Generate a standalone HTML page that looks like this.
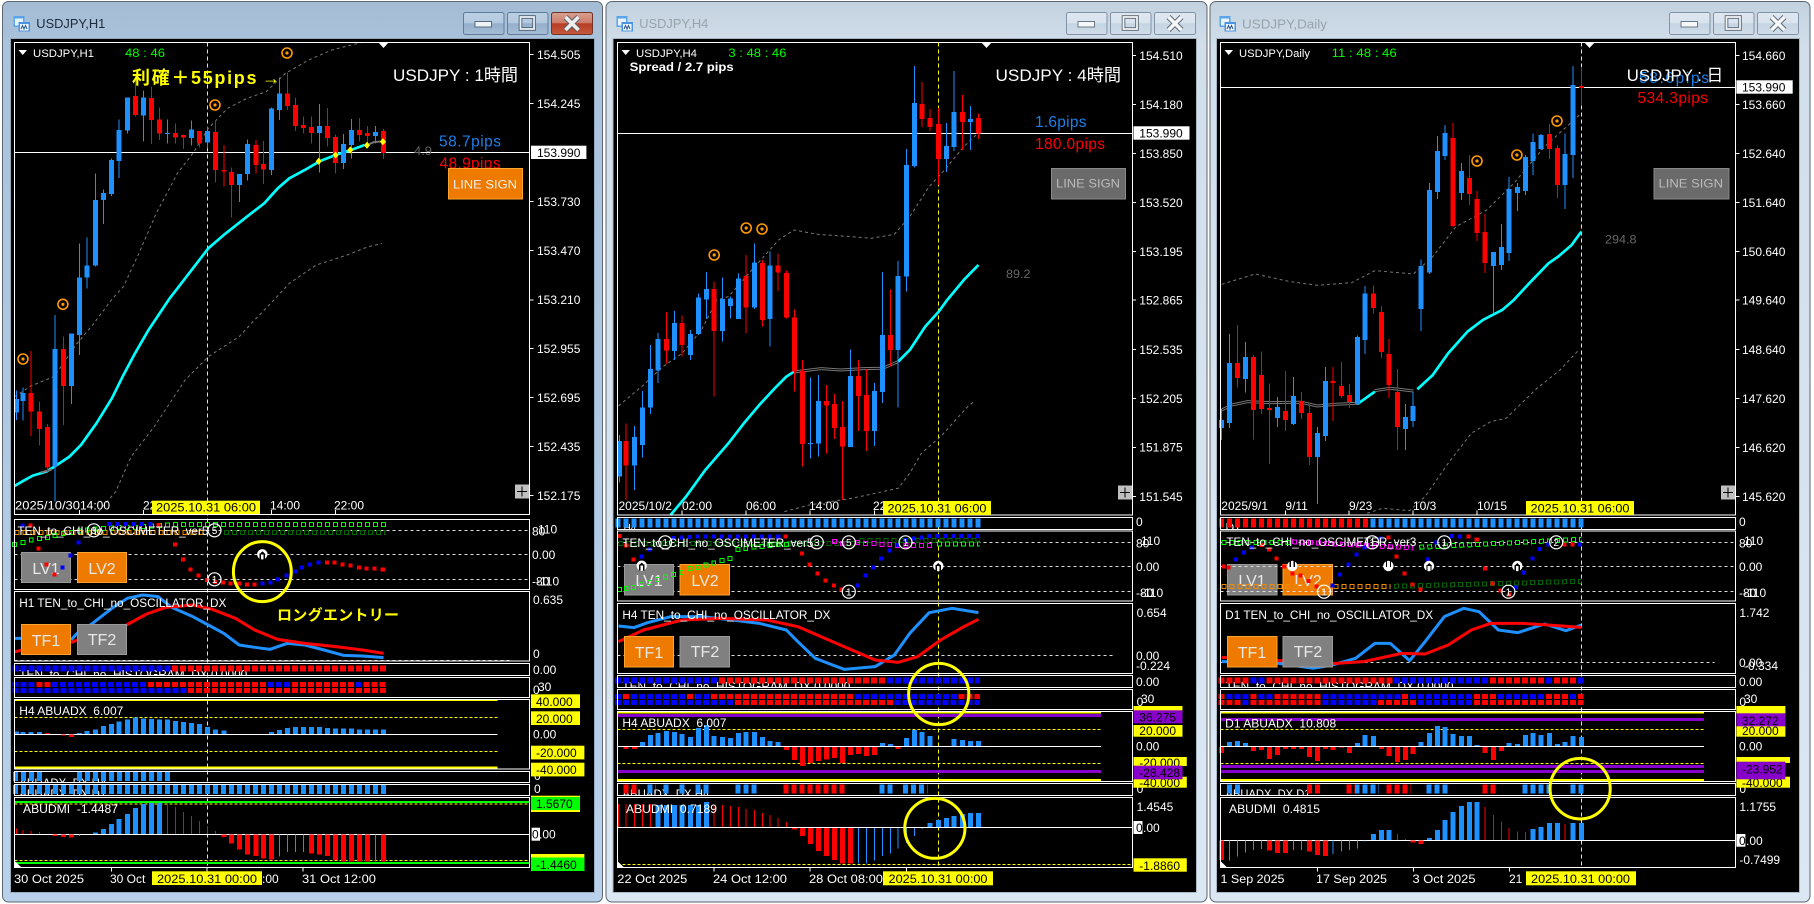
<!DOCTYPE html>
<html><head><meta charset="utf-8"><title>USDJPY</title>
<style>
html,body{margin:0;padding:0;background:#fff;width:1814px;height:904px;overflow:hidden}
svg{display:block}
text{font-family:"Liberation Sans","Noto Sans CJK JP",sans-serif;fill:#fff;font-size:12px;white-space:pre}
path,ellipse{fill:none;vector-effect:non-scaling-stroke;shape-rendering:crispEdges}
.A{transform:scale(.3858,.3333)}
.B{transform:translate(0,300px) scale(.3858,.3333)}
.C{transform:translate(0,600px) scale(.3858,.3333)}
.bw{stroke:#1e90ff;stroke-width:1}.bb{stroke:#1e90ff;stroke-width:5}
.rw{stroke:#f00;stroke-width:1}.rb{stroke:#f00;stroke-width:5}
.cy{stroke:#0ff;stroke-width:2.7;shape-rendering:auto;stroke-linejoin:round}
.gd{stroke:#777;stroke-width:1;stroke-dasharray:3 3;shape-rendering:auto}
.gl{stroke:#777;stroke-width:3;shape-rendering:auto}
.gk{stroke:#000;stroke-width:1;shape-rendering:auto}
.lb{stroke:#1e90ff;stroke-width:3;shape-rendering:auto;stroke-linejoin:round}
.lr{stroke:#f00;stroke-width:3;shape-rendering:auto;stroke-linejoin:round}
.bd{stroke:#fff;stroke-width:1}
.wd{stroke:#ddd;stroke-width:1;stroke-dasharray:3 3}
.yd{stroke:#ff0;stroke-width:1;stroke-dasharray:4 3}
.yl{stroke:#ff0;stroke-width:2}.pl{stroke:#80c;stroke-width:3}.gn{stroke:#0f0;stroke-width:2}
.wl{stroke:#fff;stroke-width:1}
.el{stroke:#ff0;stroke-width:3;shape-rendering:auto}
.sq{stroke-linecap:square;stroke-width:4}
.sb{stroke:#00f}.sr{stroke:#f00}
.rb6{stroke:#f00;stroke-width:6;stroke-dasharray:6 2}.bb6{stroke:#00f;stroke-width:6;stroke-dasharray:6 2}
.rb5{stroke:#f00;stroke-width:5;stroke-dasharray:6 2}.bb5{stroke:#00f;stroke-width:5;stroke-dasharray:6 2}
.hb{stroke:#1e90ff;stroke-width:9;stroke-dasharray:5 3}.hr{stroke:#f00;stroke-width:9;stroke-dasharray:5 3}
.ho{stroke-width:5;stroke-dasharray:5 3}.hi{stroke:#000;stroke-width:3;stroke-dasharray:3 5;stroke-dashoffset:-1}
.hg{stroke:#0f0;stroke-width:1}
.ax{font-size:12px}.k{fill:#000}
.tt{font-size:12.5px;fill:#1c2c3c}.ti{font-size:12.5px;fill:#98a2ac}
.gr{fill:#0f0}.bt{font-size:16px;text-anchor:middle;fill:#e8e8e8}
.ls{font-size:12px;fill:#eee}.lg{font-size:12px;fill:#bbb}
.bl{font-size:15.5px;fill:#1e7fe8}.re{font-size:15.5px;fill:#f00}
.big{font-size:17px}.gy{fill:#666;font-size:12px}
.n{font-size:10px;text-anchor:middle}
</style></head><body>
<svg width="1814" height="904" viewBox="0 0 1814 904" xmlns="http://www.w3.org/2000/svg">
<defs>
<linearGradient id="fa" x1="0" y1="0" x2="0" y2="1"><stop offset="0" stop-color="#a4bcd3"/><stop offset=".05" stop-color="#aac3dc"/><stop offset="1" stop-color="#b9d1ea"/></linearGradient>
<linearGradient id="fi" x1="0" y1="0" x2="0" y2="1"><stop offset="0" stop-color="#c3d1de"/><stop offset=".05" stop-color="#d2dfeb"/><stop offset="1" stop-color="#dbe7f3"/></linearGradient>
<linearGradient id="ba" x1="0" y1="0" x2="0" y2="1"><stop offset="0" stop-color="#bcd0e4"/><stop offset=".48" stop-color="#b3c9df"/><stop offset=".5" stop-color="#94aecb"/><stop offset="1" stop-color="#a5bdd6"/></linearGradient>
<linearGradient id="bc" x1="0" y1="0" x2="0" y2="1"><stop offset="0" stop-color="#d8a090"/><stop offset=".48" stop-color="#ce7d6a"/><stop offset=".5" stop-color="#b83c24"/><stop offset="1" stop-color="#c45a3e"/></linearGradient>
<linearGradient id="bi" x1="0" y1="0" x2="0" y2="1"><stop offset="0" stop-color="#dfe8f1"/><stop offset=".48" stop-color="#d9e3ee"/><stop offset=".5" stop-color="#c5d4e3"/><stop offset="1" stop-color="#d0dce9"/></linearGradient>
<g id="om"><circle r="5" fill="none" stroke="#f90" stroke-width="1.6"/><circle r="1.6" fill="#f90"/></g>
<g id="dm"><polygon points="0,-3.6 3,0 0,3.6 -3,0" fill="#ff0"/></g>
<g id="cn"><circle r="6.5" fill="none" stroke="#fff" stroke-width="1.2"/></g>
<g id="au"><circle r="5.2" fill="#fff"/><path d="M-2 5V-1M2 5V-1" stroke="#000" stroke-width="1.2"/><path d="M0 -3L-3 0H3Z" fill="#000" style="fill:#000"/></g>
<g id="ad"><circle r="5.2" fill="#fff"/><path d="M-2 -5V1M2 -5V1" stroke="#000" stroke-width="1.2"/></g>
<g id="ic"><rect x="0" y="1" width="11" height="11" fill="#5aa5e8"/><rect x="1.5" y="3.5" width="8" height="7" fill="#e6f2fc"/><rect x="5" y="7" width="11.5" height="9.5" fill="#4b95e0"/><rect x="6.5" y="9" width="8.5" height="6.5" fill="#f2f8fe"/><path d="M7.5 14L9 10.5L10.5 14L12 10.5L13.5 14" stroke="#26568f" stroke-width="1" style="shape-rendering:auto"/></g>
<g id="bm"><rect x=".5" y=".5" width="40.5" height="22" rx="2" fill="url(#ba)" stroke="#5f7c9c"/><rect x="12" y="9.5" width="16.5" height="5.5" fill="#eef3f8" stroke="#5a6a7c"/></g>
<g id="bx"><rect x=".5" y=".5" width="40.5" height="22" rx="2" fill="url(#ba)" stroke="#5f7c9c"/><rect x="13.5" y="5" width="13.5" height="12" fill="none" stroke="#4e6072" stroke-width="3.6"/><rect x="13.5" y="5" width="13.5" height="12" fill="none" stroke="#e8eef5" stroke-width="1.8"/></g>
<g id="bq"><rect x=".5" y=".5" width="41" height="22" rx="2" fill="url(#bc)" stroke="#6e3428"/><path d="M14.5 5L27.5 18M27.5 5L14.5 18" stroke="#56606a" stroke-width="5.5" style="shape-rendering:auto"/><path d="M14.5 5L27.5 18M27.5 5L14.5 18" stroke="#eee" stroke-width="3.6" style="shape-rendering:auto"/></g>
<g id="bm2"><rect x=".5" y=".5" width="40.5" height="22" rx="2" fill="url(#bi)" stroke="#8293a5"/><rect x="12" y="9.5" width="16.5" height="5.5" fill="#f6f8fa" stroke="#6b7886"/></g>
<g id="bx2"><rect x=".5" y=".5" width="40.5" height="22" rx="2" fill="url(#bi)" stroke="#8293a5"/><rect x="13.5" y="5" width="13.5" height="12" fill="none" stroke="#5b6876" stroke-width="3.6"/><rect x="13.5" y="5" width="13.5" height="12" fill="none" stroke="#f0f3f6" stroke-width="1.8"/></g>
<g id="bq2"><rect x=".5" y=".5" width="41" height="22" rx="2" fill="url(#bi)" stroke="#8293a5"/><path d="M14.5 5L27.5 18M27.5 5L14.5 18" stroke="#5b6876" stroke-width="5.5" style="shape-rendering:auto"/><path d="M14.5 5L27.5 18M27.5 5L14.5 18" stroke="#f4f6f8" stroke-width="3.6" style="shape-rendering:auto"/></g>
<path id="h1" d="M38 733h10v12h-10zM60 727h10v12h-10zM81 720h10v12h-10zM102 715h10v12h-10zM123 712h10v12h-10zM143 706h10v12h-10zM164 700h10v12h-10zM185 697h10v12h-10zM206 693h10v12h-10zM226 690h10v12h-10zM247 687h10v12h-10zM268 685h10v12h-10zM289 684h10v12h-10zM309 683h10v12h-10zM330 683h10v12h-10zM351 682h10v12h-10zM372 680h10v12h-10zM393 678h10v12h-10zM413 676h10v12h-10zM434 675h10v12h-10z"/>
<path id="h2" d="M38 868h10v12h-10zM55 865h10v12h-10zM74 862h10v12h-10zM95 853h10v12h-10zM115 847h10v12h-10zM136 838h10v12h-10zM157 831h10v12h-10zM178 823h10v12h-10zM199 817h10v12h-10zM220 806h10v12h-10zM241 802h10v12h-10zM262 795h10v12h-10zM282 789h10v12h-10zM303 781h10v12h-10zM324 775h10v12h-10zM345 748h10v12h-10zM365 745h10v12h-10zM386 741h10v12h-10zM407 739h10v12h-10zM428 736h10v12h-10zM449 734h10v12h-10zM470 734h10v12h-10z"/>
<path id="h3" d="M595 724h10v12h-10zM615 730h10v12h-10zM655 727h10v12h-10zM675 730h10v12h-10zM697 730h10v12h-10zM718 733h10v12h-10zM738 733h10v12h-10zM758 736h10v12h-10zM780 736h10v12h-10zM800 736h10v12h-10zM820 736h10v12h-10zM841 736h10v12h-10z"/>
</defs>

<!-- WINDOW 1 -->
<g>
<rect x="2.5" y="1.5" width="600" height="900.5" rx="6" fill="url(#fa)" stroke="#5c6670"/>
<rect x="11" y="39" width="583" height="853" fill="#000"/>
<rect x="10.5" y="38.5" width="584" height="854" fill="none" stroke="#7c8b9a" stroke-opacity=".5"/>
<use href="#ic" x="13.5" y="15"/>
<text class="tt" x="36.3" y="28" textLength="69" lengthAdjust="spacingAndGlyphs">USDJPY,H1</text>
<use href="#bm" x="463" y="12"/><use href="#bx" x="507" y="12"/><use href="#bq" x="551" y="12"/>

<g class="A">
<path class="yd" d="M538 127V2602"/>
<path class="gd" d="M38 1190L80 1158 140 1130 200 1030 240 975 290 898 320 860 360 760 405 640 460 520 500 460 540 385 590 325 640 295 690 275 740 220 800 180 860 150 935 128"/>
<path class="gd" d="M255 1535L300 1475 340 1370 400 1280 480 1140 540 1070 620 1010 660 960 710 900 750 850 820 795 900 765 950 742 990 730"/>
<path class="wl" d="M38 457H1373"/>
<path class="cy" d="M38 1458L60 1443 85 1427 120 1415 145 1397 180 1370 210 1335 250 1270 290 1195 320 1125 350 1060 385 990 415 938 440 895 470 850 510 790 540 745 580 705 640 650 685 610 720 565 750 535 790 510 830 483 870 465 910 450 945 435"/>
<path class="gl" style="stroke-width:2" d="M105 1418L135 1408M950 436L970 426 1000 424"/>
<path class="bw" d="M43 1172V1260M60 1162V1262M143 945V1505M185 1001V1212M206 730V1065M226 712V866M247 520V800M268 568V672M289 475V588M309 358V534M330 292V400M372 272V425M434 358V430M497 362V437M538 380V445M621 522V606M642 418V542M704 322V525M725 232V360M828 312V518M890 402V507M911 357V475M973 378V430"/>
<path class="bb" d="M43 1197V1238M60 1179V1203M143 1047V1400M185 1001V1158M206 832V1005M226 796V833M247 600V797M268 579V600M289 480V582M309 390V483M330 292V392M372 292V347M434 399V402M497 388V414M538 393V427M621 522V555M642 432V522M704 326V510M725 280V330M828 378V399M890 432V489M911 390V435M973 396V408"/>
<path class="rw" d="M81 1053V1308M102 1205V1337M123 1272V1415M164 1010V1275M351 230V350M393 260V432M413 323V420M455 370V430M476 403V447M517 393V442M559 360V548M580 435V560M600 502V652M663 420V520M683 423V552M745 218V330M766 292V393M787 350V400M808 350V430M849 324V440M870 403V520M932 354V425M953 378V435M994 387V477"/>
<path class="rb" d="M81 1179V1235M102 1234V1287M123 1281V1403M164 1047V1158M351 288V345M393 294V360M413 358V400M455 399V412M476 405V412M517 393V430M559 396V510M580 510V515M600 516V555M663 435V495M683 492V508M745 280V318M766 315V378M787 375V384M808 381V399M849 378V414M870 411V489M932 390V405M953 399V408M994 393V459"/>
<path class="wl" d="M38 127H1373V1543H38ZM1373 164h10M1373 311h10M1373 605h10M1373 752h10M1373 900h10M1373 1046h10M1373 1193h10M1373 1340h10M1373 1487h10M38 1530v13M206 1530v13M372 1530v13M704 1530v13M870 1530v13"/>
</g>
<polygon points="378,42 389,42 383.5,48" fill="#fff"/>
<polygon points="18.5,50 27,50 22.7,55" fill="#fff"/>
<rect x="515" y="484.5" width="14" height="14" fill="#c0c0c0"/><path d="M522 486.5V496.5M517 491.5H527" stroke="#000" stroke-width="1"/>

<text x="33" y="57" textLength="61" lengthAdjust="spacingAndGlyphs" style="font-size:11px">USDJPY,H1</text>
<text class="gr" x="125" y="57" textLength="40" lengthAdjust="spacingAndGlyphs">48 : 46</text>
<text x="132" y="84" textLength="124.5" style="font-size:18px;font-weight:bold;fill:#ff0">利確＋55pips</text>
<text x="262" y="84" textLength="18" lengthAdjust="spacingAndGlyphs" style="font-size:18px;font-weight:bold;fill:#ff0">→</text>
<text class="big" x="393" y="81" textLength="125" lengthAdjust="spacingAndGlyphs">USDJPY : 1時間</text>
<text class="bl" x="439" y="146.5" textLength="62">58.7pips</text>
<text class="re" x="439.5" y="168.5" textLength="61">48.9pips</text>
<text class="gy" x="414" y="155" textLength="18" lengthAdjust="spacingAndGlyphs">4.9</text>
<rect x="448.5" y="168.5" width="74" height="30.5" fill="#ee7b00" stroke="#fba42f"/>
<text class="ls" x="453" y="188.5" textLength="64" lengthAdjust="spacingAndGlyphs">LINE SIGN</text>
<g class="ax">
<text x="537" y="59">154.505</text><text x="537" y="108">154.245</text><text x="537" y="206">153.730</text><text x="537" y="255">153.470</text><text x="537" y="304">153.210</text><text x="537" y="353">152.955</text><text x="537" y="402">152.695</text><text x="537" y="451">152.435</text><text x="537" y="500">152.175</text>
</g>
<rect x="531" y="145.7" width="55.4" height="13.3" fill="#fff"/><text class="k" x="537" y="156.8">153.990</text>
<text x="15" y="509.5" textLength="65" lengthAdjust="spacingAndGlyphs">2025/10/30</text><text x="80" y="509.5">14:00</text><text x="143" y="509.5">22</text><text x="270" y="509.5">14:00</text><text x="334" y="509.5">22:00</text>
<rect x="152" y="500.7" width="108" height="13.3" fill="#ff0"/><text class="k" x="156" y="511.5" textLength="100" lengthAdjust="spacingAndGlyphs">2025.10.31 06:00</text>

<!-- sub1 -->
<g class="B">
<path class="wd" d="M38 691H1373M38 763H1373M38 838H1373"/>
<path class="ho" stroke="#0f0" d="M449 673H1000"/><path class="hi" d="M449 673H1000"/>
<path class="ho" stroke="#063" style="stroke:#060" d="M580 697H1000"/><path class="hi" d="M580 697H1000"/>
<path class="ho" style="stroke:#f08a00" d="M38 697H530"/><path class="hi" d="M38 697H530"/>
<use href="#h1" class="hg" transform="translate(-5,-6)"/>
</g>
<rect x="21.5" y="552.5" width="49" height="30" fill="#808080" stroke="#9a9a9a"/><rect x="77.5" y="552.5" width="49" height="30" fill="#ee7b00" stroke="#fba42f"/>
<text class="bt" x="46" y="574">LV1</text><text class="bt" x="102" y="574">LV2</text>
<g class="B">
<path class="sq sb" d="M58 677h.1M283 672h.1M305 672h.1M326 672h.1M347 672h.1M368 672h.1M390 672h.1M203 727h.1M183 766h.1M162 802h.1M680 850h.1M701 847h.1M721 838h.1M742 826h.1M764 814h.1M783 802h.1M804 793h.1M825 787h.1"/>
<path class="sq sr" d="M79 677h.1M100 745h.1M120 793h.1M141 823h.1M411 675h.1M453 733h.1M474 778h.1M494 808h.1M515 826h.1M536 840h.1M557 846h.1M578 848h.1M598 850h.1M619 850h.1M640 853h.1M660 853h.1M847 787h.1M867 787h.1M888 793h.1M909 796h.1M930 802h.1M950 805h.1M971 805h.1M992 808h.1"/>
</g>
<text x="17.4" y="535" textLength="191" lengthAdjust="spacingAndGlyphs" style="font-size:11.5px">TEN_to_CHI_no_OSCIMETER_ver5</text>
<use href="#cn" x="93.8" y="530.3"/><text class="n" x="93.8" y="534">3</text>
<use href="#cn" x="214.5" y="530.3"/><text class="n" x="214.5" y="534">5</text>
<use href="#cn" x="214.5" y="579.3"/><text class="n" x="214.5" y="583">1</text>
<use href="#au" x="262.3" y="554.3"/>
<g class="ax"><text x="538" y="533.5">110</text><text x="532" y="535.5">80</text><text x="532" y="559">0.00</text><text x="532" y="585.5">-80</text><text x="536" y="585.5">-110</text></g>

<!-- sub2 -->
<g class="C">
<path class="wd" d="M38 182H1320"/>
<path class="lb" d="M38 115H60M184 120L200 100 240 70 290 25 330 -5 370 -15 410 -10 445 22 500 50 540 75 580 100 620 135 660 142 700 148 745 130 790 135 840 150 890 166 940 168 994 173"/>
<path class="lr" d="M38 155L60 150M184 128L200 120M328 75L380 42 430 22 500 15 550 28 610 55 660 90 720 118 790 130 870 140 940 150 994 160"/>
</g>
<text x="19.3" y="607" textLength="207" lengthAdjust="spacingAndGlyphs" style="font-size:11.5px">H1 TEN_to_CHI_no_OSCILLATOR_DX</text>
<rect x="21.5" y="624.5" width="49" height="30" fill="#ee7b00" stroke="#fba42f"/><rect x="77.5" y="624.5" width="49" height="30" fill="#808080" stroke="#9a9a9a"/>
<text class="bt" x="46" y="646">TF1</text><text class="bt" x="102" y="645">TF2</text>
<text x="277" y="620" textLength="122" style="font-size:15px;font-weight:bold;fill:#ff0">ロングエントリー</text>
<text class="ax" x="533" y="604">0.635</text><text class="ax" x="533" y="658">0</text>

<!-- sub3.. -->
<svg x="15" y="663.5" width="515" height="11.5"><text x="4.3" y="15" textLength="228" lengthAdjust="spacingAndGlyphs">TEN_to_CHI_no_HISTOGRAM_DX 0.0000</text></svg>
<svg x="15" y="771" width="515" height="11"><text x="4.3" y="16" textLength="87" lengthAdjust="spacingAndGlyphs">ABUADX_DX H4</text></svg>
<svg x="15" y="784" width="515" height="11"><text x="4.3" y="14" textLength="87" lengthAdjust="spacingAndGlyphs">ABUADX_DX D1</text></svg>
<g class="C">
<path class="bb6" d="M31.9 206H445.9"/><path class="rb6" d="M445.9 206H1003"/>
<path class="bb5" d="M31.9 254H94M135.4 254H383.8M694.3 254H756.4M922 254H942.7"/>
<path class="rb5" d="M94 254H135M383.8 254H694M756.4 254H922M942.7 254H1003"/>
<path class="bb5" d="M31.9 271H487"/><path class="rb5" d="M487.3 271H1003"/>
<path class="yl" d="M38 300H1290M38 503H1290"/>
<path class="yd" style="stroke-dasharray:3 2" d="M38 352H1290M38 454H1290"/>
<path class="wl" d="M38 403H1290"/>
<path class="bb" d="M43 395V402M60 396V402M81 396V402M102 396V402M206 399V402M226 393V402M247 388V402M268 378V402M289 372V402M309 365V402M330 358V402M351 352V402M372 356V402M393 357V402M413 358V402M434 359V402M455 363V402M476 366V402M497 369V402M517 372V402M538 381V402M559 388V402M580 392V402M704 396V402M725 390V402M745 384V402M766 381V402M787 381V402M808 381V402M828 381V402M849 384V402M870 385V402M890 385V402M911 385V402M932 388V402M953 388V402M973 388V402M994 388V402"/>
<path class="rb" d="M123 399V402M164 403V407M185 403V411"/>
<path class="hb" d="M33.2 529.5H116M199 529.5H442"/>
<path class="hb" d="M33.2 568.5H1000"/>
<path class="gn" d="M38 606H1373M38 789H1373"/>
<path class="yd" style="stroke-dasharray:3 2" d="M38 612H1373M38 782H1373"/>
<path class="wl" d="M38 703H1373"/>
<path class="bb" d="M247 697V702M268 687V702M289 672V702M309 657V702M330 642V702M351 624V702M372 612V702M393 609V702M413 609V702"/>
<path class="rw" d="M43 685V702M60 690V702M81 693V702M102 696V702M434 612V702M455 621V702M476 636V702M497 648V702M517 663V702M538 678V702M559 693V702"/>
<path class="rb" d="M143 704V708M164 704V711M185 704V713M580 704V711M600 704V730M621 704V748M642 704V763M663 704V768M683 704V775M704 704V778M808 704V760M828 704V763M849 704V768M870 704V780M890 704V785M911 704V785M932 704V785M953 704V785M994 704V785"/>
<path class="bw" d="M206 704V708M725 704V770M745 704V756M766 704V756M787 704V756M973 704V785"/>
<path class="wl" d="M38 -25H1373V183H38ZM38 190H1373V226H38ZM38 232H1373V292H38ZM38 298H1373V507H38ZM38 514H1373V547H38ZM38 553H1373V586H38ZM38 592H1373V802H38ZM289 802v12M537 802v12M786 802v12"/>
</g>
<g class="B"><path class="wl" d="M38 658H1373V868H38Z"/><ellipse class="el" cx="680" cy="815" rx="75" ry="90"/></g>
<polygon points="14.7,861 14.7,867 21,867" fill="#fff"/>
<text x="19.3" y="715" textLength="104" lengthAdjust="spacingAndGlyphs">H4 ABUADX  6.007</text>
<text x="23" y="813" textLength="95" lengthAdjust="spacingAndGlyphs">ABUDMI  -1.4487</text>
<g class="ax"><text x="533" y="674">0.00</text><text x="538" y="691">30</text><text x="533" y="694">0</text><text x="533" y="738.5">0.00</text><text x="534" y="780">0</text><text x="534" y="793">0</text></g>
<rect x="531" y="694.3" width="49" height="13.7" fill="#ff0"/><text class="k" x="536" y="706">40.000</text>
<rect x="531" y="711.3" width="49" height="13.7" fill="#ff0"/><text class="k" x="536" y="723">20.000</text>
<rect x="531" y="745.7" width="53.4" height="13.7" fill="#ff0"/><text class="k" x="536" y="757">-20.000</text>
<rect x="531" y="762.7" width="53.4" height="13.7" fill="#ff0"/><text class="k" x="536" y="774">-40.000</text>
<rect x="531" y="795.7" width="49" height="16.3" fill="#ff0"/><rect x="531" y="797" width="49" height="13" fill="#0f0"/><text class="k" x="536" y="808">1.5670</text>
<rect x="531" y="854" width="53.4" height="17" fill="#ff0"/><rect x="531" y="857.5" width="53.4" height="13.5" fill="#0f0"/><text class="k" x="536" y="869">-1.4460</text>
<rect x="531.6" y="827.7" width="8.4" height="13" fill="#fff"/><text class="k" x="532" y="838.5">0</text><text x="539" y="838.5">.00</text>
<text x="14" y="883" textLength="70" lengthAdjust="spacingAndGlyphs">30 Oct 2025</text><text x="110" y="883">30 Oct</text><text x="262" y="883">:00</text><text x="302" y="883" textLength="74" lengthAdjust="spacingAndGlyphs">31 Oct 12:00</text>
<rect x="152" y="871.3" width="110" height="13.7" fill="#ff0"/><text class="k" x="157" y="883" textLength="100" lengthAdjust="spacingAndGlyphs">2025.10.31 00:00</text>
<use href="#om" x="287" y="53"/><use href="#om" x="215" y="105"/><use href="#om" x="62.9" y="304.3"/><use href="#om" x="23" y="359"/>
<use href="#dm" x="318.7" y="161.3"/><use href="#dm" x="335.6" y="155"/><use href="#dm" x="350.3" y="150"/><use href="#dm" x="367" y="145.3"/><use href="#dm" x="383" y="141.7"/>
</g>

<!-- WINDOW 2 -->
<g transform="translate(605,0)">
<rect x="1" y="1.5" width="601" height="900.5" rx="6" fill="url(#fi)" stroke="#5c6670"/>
<rect x="8.5" y="39" width="582.5" height="853" fill="#000"/>
<rect x="8" y="38.5" width="583.5" height="854" fill="none" stroke="#7c8b9a" stroke-opacity=".5"/>
<use href="#ic" x="11.5" y="15"/>
<text class="ti" x="34.3" y="28" textLength="69" lengthAdjust="spacingAndGlyphs">USDJPY,H4</text>
<use href="#bm2" x="461" y="12"/><use href="#bx2" x="505" y="12"/><use href="#bq2" x="549" y="12"/>
<g class="A">
<path class="yd" d="M864 127V2602"/>
<path class="gd" d="M35 1218L100 1155 150 1100 200 1060 250 990 290 900 320 890 400 785 450 720 490 690 550 703 640 710 690 715 750 703 790 650 840 560 880 510 930 440 968 398"/>
<path class="gd" d="M465 1535L530 1515 640 1495 760 1465 790 1420 820 1360 870 1310 940 1220 960 1202"/>
<path class="wl" d="M32 400H1367"/>
<path class="gl" d="M490 1116L560 1106 610 1110 670 1106 720 1105 760 1085"/><path class="gk" d="M490 1116L560 1106 610 1110 670 1106 720 1105 760 1085"/>
<path class="cy" d="M170 1545L210 1490 260 1410 320 1330 360 1270 400 1215 440 1165 470 1130 490 1115M760 1085L790 1050 830 980 865 935 887 900 930 840 968 795"/>
<path class="bw" d="M38 1305V1448M76 1278V1470M97 1173V1373M118 1035V1242M138 999V1149M180 933V1080M221 990V1080M242 880V1005M263 816V957M304 833V1025M325 890V955M346 820V957M387 730V927M428 755V1040M533 1133V1375M553 1125V1370M636 1048V1340M698 1149V1338M719 816V1209M760 783V1222M781 447V875M802 198V503M885 369V516M905 213V453M947 318V450"/>
<path class="bb" d="M38 1323V1430M76 1311V1397M97 1222V1335M118 1107V1223M138 1017V1111M180 969V1053M221 1002V1065M242 893V1002M263 867V898M304 897V993M325 895V918M346 835V957M387 788V922M428 796V957M533 1329V1332M553 1203V1330M636 1128V1341M698 1173V1293M719 1005V1176M760 828V1050M781 495V830M802 309V498M885 438V477M905 336V441M947 357V366"/>
<path class="rw" d="M55 1270V1500M159 936V1090M200 947V1070M283 845V1190M366 765V1000M408 780V980M449 760V873M470 812V955M491 928V1175M512 1080V1400M574 1155V1360M595 1182V1317M615 1203V1500M657 1080V1293M678 1107V1353M740 868V1100M822 246V381M843 327V393M864 324V555M926 285V450M968 340V417"/>
<path class="rb" d="M55 1323V1397M159 1017V1052M200 969V1035M283 867V993M366 828V922M408 789V960M449 796V818M470 819V952M491 952V1115M512 1113V1332M574 1203V1216M595 1212V1284M615 1281V1340M657 1128V1188M678 1185V1293M740 1005V1050M822 312V357M843 354V381M864 372V477M926 336V366M968 354V400"/>
<path class="wl" d="M32 127H1367V1545H32ZM1367 167h10M1367 313h10M1367 461h10M1367 608h10M1367 755h10M1367 900h10M1367 1049h10M1367 1195h10M1367 1342h10M1367 1490h10M32 1532v13M200 1532v13M366 1532v13M532 1532v13M698 1532v13"/>
</g>
<polygon points="376,42 387,42 381.5,48" fill="#fff"/>
<polygon points="16.5,50 25,50 20.7,55" fill="#fff"/>
<rect x="513" y="485.5" width="14" height="14" fill="#c0c0c0"/><path d="M520 487.5V497.5M515 492.5H525" stroke="#000" stroke-width="1"/>
<text x="31" y="57" textLength="61" lengthAdjust="spacingAndGlyphs" style="font-size:11px">USDJPY,H4</text>
<text class="gr" x="123.4" y="57" textLength="58" lengthAdjust="spacingAndGlyphs">3 : 48 : 46</text>
<text x="24.7" y="71" textLength="104" lengthAdjust="spacingAndGlyphs" style="font-size:11.5px;font-weight:bold">Spread / 2.7 pips</text>
<text class="big" x="390.5" y="81" textLength="125.5" lengthAdjust="spacingAndGlyphs">USDJPY : 4時間</text>
<text class="bl" x="430" y="127" textLength="51.5">1.6pips</text>
<text class="re" x="430" y="149" textLength="70">180.0pips</text>
<text class="gy" x="401" y="278" textLength="24.5" lengthAdjust="spacingAndGlyphs">89.2</text>
<rect x="446.5" y="168.5" width="74" height="30.5" fill="#6a6a6a" stroke="#8a8a8a"/>
<text class="lg" x="451" y="187.5" textLength="64" lengthAdjust="spacingAndGlyphs">LINE SIGN</text>
<g class="ax"><text x="534.3" y="60">154.510</text><text x="534.3" y="109">154.180</text><text x="534.3" y="158">153.850</text><text x="534.3" y="207">153.520</text><text x="534.3" y="256">153.195</text><text x="534.3" y="304.5">152.865</text><text x="534.3" y="354">152.535</text><text x="534.3" y="403">152.205</text><text x="534.3" y="451.5">151.875</text><text x="534.3" y="501">151.545</text></g>
<rect x="528.5" y="126.3" width="56" height="13.4" fill="#fff"/><text class="k" x="534.3" y="137.5">153.990</text>
<text x="13.5" y="510">2025/10/2</text><text x="77" y="510">02:00</text><text x="141" y="510">06:00</text><text x="204" y="510">14:00</text><text x="268" y="510">22</text>
<rect x="278" y="501" width="108" height="14" fill="#ff0"/><text class="k" x="282.5" y="512.5" textLength="99" lengthAdjust="spacingAndGlyphs">2025.10.31 06:00</text>
<svg x="12.5" y="517" width="515" height="12"><text x="6" y="14" style="font-size:10px">H4</text></svg>
<svg x="12.5" y="676" width="515" height="12"><text x="4.9" y="14.5" textLength="228" lengthAdjust="spacingAndGlyphs">TEN_to_CHI_no_HISTOGRAM_DX 0.0000</text></svg>
<svg x="12.5" y="783" width="515" height="12"><text x="4.9" y="15" textLength="87" lengthAdjust="spacingAndGlyphs">ABUADX_DX H4</text></svg>
<g class="B">
<path class="hb" d="M27.8 669H974"/>
<path class="wd" d="M32 727H1367M32 799H1367M32 875H1367"/>
<path class="ho" style="stroke:#060" d="M35 730H660M660 721H972"/><path class="hi" d="M35 730H660M660 721H972"/>
<path class="ho" style="stroke:#0f0" d="M860 732H972"/><path class="hi" d="M860 732H972"/>
<use href="#h3" style="stroke:#f0f;stroke-width:1" transform="translate(-5,-6)"/>
</g>
<rect x="19.5" y="564.5" width="49" height="30.5" fill="#808080" stroke="#9a9a9a"/><rect x="75" y="564.5" width="49.5" height="30.5" fill="#ee7b00" stroke="#fba42f"/>
<text class="bt" x="44" y="586">LV1</text><text class="bt" x="100" y="586">LV2</text>
<g class="B">
<use href="#h2" class="hg" transform="translate(-5,-6)"/>
<path class="sq sb" d="M94 769h.1M115 748h.1M178 714h.1M198 712h.1M219 711h.1M240 710h.1M261 710h.1M282 710h.1M303 710h.1M324 710h.1M345 710h.1M365 710h.1M386 710h.1M407 710h.1M428 710h.1M449 710h.1M654 856h.1M675 826h.1M695 802h.1M716 775h.1M737 751h.1M758 735h.1M780 720h.1M800 715h.1M820 712h.1M840 708h.1M861 708h.1M882 708h.1M903 708h.1M923 708h.1M944 708h.1M965 708h.1"/>
<path class="sq sr" d="M38 708h.1M55 736h.1M74 778h.1M468 710h.1M510 760h.1M530 793h.1M551 820h.1M572 841h.1M593 856h.1M613 868h.1"/>
</g>
<text x="17.4" y="547" textLength="191" lengthAdjust="spacingAndGlyphs" style="font-size:11.5px">TEN_to_CHI_no_OSCIMETER_ver5</text>
<use href="#cn" x="60.2" y="542.3"/><text class="n" x="60.2" y="546">1</text>
<use href="#cn" x="211.8" y="542.3"/><text class="n" x="211.8" y="546">3</text>
<use href="#cn" x="243.8" y="542.3"/><text class="n" x="243.8" y="546">5</text>
<use href="#cn" x="300.5" y="542.3"/><text class="n" x="300.5" y="546">1</text>
<use href="#cn" x="243.8" y="591.7"/><text class="n" x="243.8" y="595.5">1</text>
<use href="#au" x="36.7" y="565.7"/><use href="#au" x="333.3" y="566"/>
<g class="ax"><text x="536" y="545">110</text><text x="531" y="547.5">80</text><text x="531" y="571">0.00</text><text x="531" y="597">-80</text><text x="535" y="597">-110</text><text x="531" y="526">0</text></g>
<g class="C">
<path class="wd" d="M32 166H1315"/>
<path class="lb" d="M35 78L75 83 110 68 170 50 250 50 330 60 400 70 470 90 500 125 545 175 590 195 620 208 700 200 750 165 790 100 840 38 900 25 968 38"/>
<path class="lr" d="M35 125L100 90 200 60 300 55 420 60 500 80 570 115 640 150 700 180 760 187 810 170 870 120 930 80 968 58"/>
<path class="bb6" d="M26.5 242H295.6M730.35 242H972"/><path class="rb6" d="M295.6 242H730.3"/>
<path class="bb5" d="M26.5 289H47M68 289H213M234 289H275M647.5 289H916"/><path class="rb5" d="M47 289H68M213 289H234M275 289H647.5M916.65 289H972"/>
<path class="bb5" d="M26.5 307H337M751 307H972"/><path class="rb5" d="M337 307H751"/>
<path class="yl" d="M32 338H1285M32 540H1285"/>
<path class="pl" d="M32 347H1285M32 514H1285"/>
<path class="yd" style="stroke-dasharray:3 2" d="M32 388H1285M32 490H1285"/>
<path class="wl" d="M32 439H1285"/>
<path class="bb" d="M97 426V438M118 405V438M138 399V438M159 393V438M180 396V438M200 402V438M221 411V438M242 384V438M263 375V438M283 408V438M304 411V438M325 414V438M346 399V438M366 396V438M387 396V438M408 411V438M428 423V438M449 426V438M719 429V438M740 432V438M781 414V438M802 390V438M822 396V438M843 408V438M905 417V438M926 420V438M947 423V438M968 423V438"/>
<path class="rb" d="M55 441V447M76 441V447M470 441V450M491 441V480M512 441V498M533 441V489M553 441V483M574 441V478M595 441V474M615 441V489M636 441V465M657 441V462M678 441V468M698 441V465M760 441V447"/>
<path class="hr" d="M48.5 567H90M462.5 567H629"/><path class="hb" d="M110.6 567H132M152 567H173M193.4 567H214M234.8 567H276M338.3 567H400M710.9 567H752M773 567H836"/>
<path class="yd" style="stroke-dasharray:3 2" d="M32 793H1367"/>
<path class="wl" d="M32 682H1367"/>
<path class="bb" d="M138 615V681M159 615V681M180 615V681M200 615V681M221 615V681M242 615V681M263 606V681M843 669V681M864 660V681M885 654V681M905 648V681M926 642V681M947 639V681M968 639V681"/>
<path class="rw" d="M35 612V681M55 612V681M76 612V681M97 612V681M118 612V681M283 615V681M304 615V681M325 618V681M346 621V681M366 627V681M387 630V681M408 639V681M428 645V681M449 654V681M470 666V681"/>
<path class="rb" d="M491 684V688M512 684V708M533 684V732M553 684V753M574 684V768M595 684V780M615 684V790M636 684V790"/>
<path class="bw" d="M657 684V790M678 684V790M698 684V782M719 684V768M740 684V760M760 684V745M781 684V729M802 684V708M822 684V687"/>
<path class="wl" d="M32 10H1367V220H32ZM32 227H1367V263H32ZM32 268H1367V328H32ZM32 334H1367V544H32ZM32 550H1367V586H32ZM32 592H1367V802H32ZM283 802v12M532 802v12M781 802v12"/>
</g>
<g class="B"><path class="wl" d="M32 652H1367V688H32ZM32 693H1367V903H32Z"/></g>
<polygon points="12.3,861 12.3,867 18.6,867" fill="#fff"/>
<text x="17.4" y="619" textLength="208" lengthAdjust="spacingAndGlyphs" style="font-size:11.5px">H4 TEN_to_CHI_no_OSCILLATOR_DX</text>
<rect x="19.5" y="636.5" width="49" height="30.5" fill="#ee7b00" stroke="#fba42f"/><rect x="75" y="636.5" width="49.5" height="30.5" fill="#808080" stroke="#9a9a9a"/>
<text class="bt" x="44" y="658">TF1</text><text class="bt" x="100" y="657">TF2</text>
<text x="17.4" y="727" textLength="104" lengthAdjust="spacingAndGlyphs">H4 ABUADX  6.007</text>
<text x="21" y="813" textLength="91" lengthAdjust="spacingAndGlyphs">ABUDMI  0.7189</text>
<g class="ax"><text x="531.6" y="617">0.654</text><text x="531" y="660">0.00</text><text x="531" y="670">-0.224</text><text x="531" y="686">0.00</text><text x="536" y="703">30</text><text x="531.6" y="706">0</text><text x="531" y="750.5">0.00</text><text x="531.6" y="793">0</text><text x="531.6" y="811">1.4545</text></g>
<rect x="528.5" y="706" width="49" height="8" fill="#ff0"/>
<rect x="528.5" y="710.3" width="49" height="13" fill="#80c"/><text class="k" x="534.3" y="721.5">36.275</text>
<rect x="528.5" y="725" width="49" height="11.7" fill="#ff0"/><text class="k" x="534.3" y="735">20.000</text>
<rect x="528.5" y="757" width="53.3" height="9" fill="#ff0"/><text class="k" x="534.3" y="767">-20.000</text>
<rect x="528.5" y="776.7" width="53.3" height="11" fill="#ff0"/><text class="k" x="534.3" y="787">-40.000</text>
<rect x="528.5" y="765.7" width="49" height="13.6" fill="#80c"/><text class="k" x="534.3" y="777">-28.428</text>
<rect x="528.5" y="821" width="9" height="13" fill="#fff"/><text class="k" x="531" y="832">0</text><text x="538" y="832">.00</text>
<rect x="528.5" y="858.3" width="53.3" height="13.4" fill="#ff0"/><text class="k" x="534.3" y="870">-1.8860</text>
<text x="12.3" y="883" textLength="70" lengthAdjust="spacingAndGlyphs">22 Oct 2025</text><text x="108" y="883" textLength="74" lengthAdjust="spacingAndGlyphs">24 Oct 12:00</text><text x="204" y="883" textLength="74" lengthAdjust="spacingAndGlyphs">28 Oct 08:00</text>
<rect x="278" y="871.3" width="110" height="14" fill="#ff0"/><text class="k" x="283.5" y="883" textLength="99" lengthAdjust="spacingAndGlyphs">2025.10.31 00:00</text>
<g class="C"><ellipse class="el" cx="865" cy="282" rx="78" ry="92"/><ellipse class="el" cx="855" cy="685" rx="78" ry="90"/></g>
<use href="#om" x="109.2" y="255"/><use href="#om" x="141.2" y="228"/><use href="#om" x="157" y="229"/>
</g>

<!-- WINDOW 3 -->
<g transform="translate(1209,0)">
<rect x="1" y="1.5" width="600" height="900.5" rx="6" fill="url(#fi)" stroke="#5c6670"/>
<rect x="8" y="39" width="582" height="853" fill="#000"/>
<rect x="7.5" y="38.5" width="583" height="854" fill="none" stroke="#7c8b9a" stroke-opacity=".5"/>
<use href="#ic" x="10.5" y="15"/>
<text class="ti" x="33" y="28.5" textLength="85" lengthAdjust="spacingAndGlyphs">USDJPY,Daily</text>
<use href="#bm2" x="460" y="12"/><use href="#bx2" x="504" y="12"/><use href="#bq2" x="548" y="12"/>
<g class="A">
<path class="yd" d="M965 127V2602"/>
<path class="gd" d="M33 853L120 822 210 845 280 856 370 848 430 812 530 822 580 770 640 680 720 630 790 550 870 440 965 340"/>
<path class="gd" d="M410 1540L450 1525 520 1532 560 1490 620 1390 680 1300 730 1265 770 1255 850 1165 910 1110 960 1048"/>
<path class="wl" d="M30 262H1365"/>
<path class="gl" d="M33 1230L60 1215 100 1205 160 1208 240 1207 280 1218 330 1213 385 1210M430 1172L470 1165 530 1173"/><path class="gk" d="M33 1230L60 1215 100 1205 160 1208 240 1207 280 1218 330 1213 385 1210M430 1172L470 1165 530 1173"/>
<path class="cy" d="M385 1212L430 1175M540 1168L580 1125 620 1060 670 995 710 960 760 930 790 900 830 850 880 790 905 770 940 735 965 695"/>
<path class="bw" d="M33 1227V1320M53 1002V1284M95 1026V1177M177 1191V1281M219 1131V1275M281 1281V1512M302 1101V1323M385 1007V1215M405 858V1062M509 1212V1350M529 1176V1281M550 778V993M571 549V822M592 408V597M612 375V480M654 489V600M737 756V940M758 672V810M778 531V783M799 549V633M820 465V585M840 400V525M861 402V450M923 400V627M944 198V534"/>
<path class="bb" d="M33 1260V1284M53 1089V1269M95 1071V1137M177 1221V1254M219 1188V1272M281 1299V1371M302 1143V1308M385 1011V1212M405 880V1020M509 1251V1287M529 1218V1263M550 798V927M571 570V817M592 453V576M612 399V468M654 513V579M737 756V798M758 741V795M778 567V759M799 561V579M820 471V573M840 426V483M861 405V447M923 462V555M944 255V465"/>
<path class="rw" d="M74 975V1162M115 1065V1318M136 1055V1242M157 1150V1392M198 1113V1293M240 1176V1257M260 1209V1395M322 1101V1263M343 1086V1194M364 1152V1224M426 856V940M447 918V1074M467 1017V1194M488 1107V1350M633 369V681M675 465V615M695 573V723M716 642V819M882 372V477M903 435V594M965 201V315"/>
<path class="rb" d="M74 1089V1134M115 1071V1230M136 1125V1227M157 1224V1230M198 1233V1260M240 1203V1239M260 1239V1371M322 1143V1149M343 1158V1188M364 1185V1206M426 880V924M447 936V1056M467 1062V1155M488 1176V1281M633 414V678M675 534V582M695 597V699M716 696V789M882 402V447M903 444V555M965 258V264"/>
<path class="wl" d="M30 127H1365V1545H30ZM1365 167h10M1365 314h10M1365 461h10M1365 608h10M1365 755h10M1365 900h10M1365 1049h10M1365 1196h10M1365 1343h10M1365 1490h10M30 1532v13M198 1532v13M363 1532v13M529 1532v13M695 1532v13"/>
</g>
<polygon points="375,42 386,42 380.5,48" fill="#fff"/>
<polygon points="15.5,50 24,50 19.7,55" fill="#fff"/>
<rect x="512" y="485.5" width="14" height="14" fill="#c0c0c0"/><path d="M519 487.5V497.5M514 492.5H524" stroke="#000" stroke-width="1"/>
<text x="30" y="57" textLength="71" lengthAdjust="spacingAndGlyphs" style="font-size:11px">USDJPY,Daily</text>
<text class="gr" x="122.7" y="57" textLength="65" lengthAdjust="spacingAndGlyphs">11 : 48 : 46</text>
<text class="bl" x="430" y="83" textLength="70">58.6pips</text>
<text class="big" x="417.8" y="81" textLength="96.5" lengthAdjust="spacingAndGlyphs">USDJPY : 日</text>
<text class="re" x="428.5" y="103" textLength="70.5">534.3pips</text>
<text class="gy" x="396" y="243.5" textLength="31.5" lengthAdjust="spacingAndGlyphs">294.8</text>
<rect x="445" y="168.5" width="75" height="30.5" fill="#6a6a6a" stroke="#8a8a8a"/>
<text class="lg" x="449.5" y="187.5" textLength="64.5" lengthAdjust="spacingAndGlyphs">LINE SIGN</text>
<g class="ax"><text x="533" y="60">154.660</text><text x="533" y="109">153.660</text><text x="533" y="158">152.640</text><text x="533" y="207">151.640</text><text x="533" y="256">150.640</text><text x="533" y="304.5">149.640</text><text x="533" y="354">148.640</text><text x="533" y="403">147.620</text><text x="533" y="452">146.620</text><text x="533" y="501">145.620</text></g>
<rect x="527.4" y="80.3" width="56.3" height="13.4" fill="#fff"/><text class="k" x="533" y="91.5">153.990</text>
<text x="12.3" y="510">2025/9/1</text><text x="76.4" y="510">9/11</text><text x="140" y="510">9/23</text><text x="204" y="510">10/3</text><text x="268" y="510">10/15</text>
<rect x="317" y="501" width="108" height="14" fill="#ff0"/><text class="k" x="321.5" y="512.5" textLength="99" lengthAdjust="spacingAndGlyphs">2025.10.31 06:00</text>
<svg x="11.5" y="517" width="515" height="12"><text x="5" y="14.5">D1</text></svg>
<svg x="11.5" y="676" width="515" height="12"><text x="5" y="14.5" textLength="228" lengthAdjust="spacingAndGlyphs">TEN_to_CHI_no_HISTOGRAM_DX 0.0000</text></svg>
<svg x="11.5" y="783" width="515" height="12"><text x="5" y="15" textLength="85" lengthAdjust="spacingAndGlyphs">ABUADX_DX D1</text></svg>
<rect x="18.5" y="564.5" width="49.5" height="30.5" fill="#808080" stroke="#9a9a9a"/><rect x="74" y="564.5" width="49.5" height="30.5" fill="#ee7b00" stroke="#fba42f"/>
<text class="bt" x="43" y="586">LV1</text><text class="bt" x="99" y="586">LV2</text>
<g class="B">
<path class="hr" d="M25.8 669H419"/><path class="hb" d="M419.1 669H972"/>
<path class="wd" d="M30 727H1365M30 799H1365M30 875H1365"/>
<path class="ho" style="stroke:#0f0" d="M33 727H215M545 742L965 718"/><path class="hi" d="M33 727H215M545 742L965 718"/>
<path class="ho" style="stroke:#f0f" d="M215 725L530 744"/><path class="hi" d="M215 725L530 744"/>
<path class="ho" style="stroke:#f08a00" d="M33 859H470"/>
<path class="hi" d="M33 859H46M322.8 859H470"/><path class="hi" style="stroke:#808080" d="M53.7 859H177"/><path class="hi" style="stroke:#000" d="M177.9 859H198"/><path class="hi" style="stroke:#ee7b00" d="M198.6 859H322"/>
<path class="ho" style="stroke:#060" d="M480 859L965 844"/><path class="hi" d="M480 859L965 844"/>
<path class="sq sb" d="M70 778h.1M91 757h.1M112 742h.1M320 857h.1M340 823h.1M361 793h.1M382 763h.1M403 742h.1M445 715h.1M568 778h.1M590 727h.1M630 708h.1M651 709h.1M796 862h.1M817 817h.1M838 775h.1M858 747h.1M880 733h.1M962 733h.1"/>
<path class="sq sr" d="M38 800h.1M50 802h.1M136 735h.1M155 748h.1M175 775h.1M195 800h.1M216 820h.1M237 826h.1M258 843h.1M279 859h.1M465 712h.1M486 769h.1M507 820h.1M528 853h.1M548 868h.1M673 709h.1M694 718h.1M715 805h.1M735 851h.1M756 871h.1M778 883h.1M922 733h.1M942 734h.1"/>
</g>
<text x="17.4" y="546" textLength="190" lengthAdjust="spacingAndGlyphs" style="font-size:11.5px">TEN_to_CHI_no_OSCIMETER_ver3</text>
<use href="#cn" x="163.2" y="542.3"/><text class="n" x="163.2" y="546">1</text>
<use href="#cn" x="235.3" y="542.3"/><text class="n" x="235.3" y="546">1</text>
<use href="#cn" x="347.2" y="542.3"/><text class="n" x="347.2" y="546">2</text>
<use href="#cn" x="115" y="591.7"/><text class="n" x="115" y="595.5">1</text>
<use href="#cn" x="299.4" y="591.7"/><text class="n" x="299.4" y="595.5">1</text>
<use href="#ad" x="83.3" y="566"/><use href="#ad" x="179.4" y="566"/><use href="#au" x="220" y="566"/><use href="#au" x="308.3" y="566"/>
<g class="ax"><text x="535" y="545">110</text><text x="530" y="547.5">80</text><text x="530" y="571">0.00</text><text x="530" y="597">-80</text><text x="534" y="597">-110</text><text x="530" y="526">0</text></g>
<g class="C">
<path class="wd" d="M30 187H1310"/>
<path class="lb" d="M33 185L150 185 270 205 320 195 380 175 430 130 470 130 520 182 560 125 610 50 660 25 700 35 750 90 800 98 870 72 925 92 965 75"/>
<path class="lr" d="M33 172L50 173 150 180 330 190 400 185 500 160 560 162 620 135 680 90 730 70 810 70 880 75 965 82"/>
<path class="rb6" d="M24.5 242H107M149 242H480M728.35 242H873M894 242H956"/><path class="bb6" d="M107 242H149M480 242H728M873 242H894M956 242H971"/>
<path class="rb5" d="M24.5 289H45M107 289H128M169.45 289H293.6M500.65 289H521M687 289H749M873 289H935M956 289H971"/>
<path class="bb5" d="M45 289H107M128 289H169M293.6 289H500.6M521.3 289H687M749 289H873M935.95 289H956"/>
<path class="rb5" d="M24.5 307H86.6M107 307H293M438.55 307H542M687 307H971"/><path class="bb5" d="M86.65 307H107M293.6 307H438.5M542 307H687"/>
<path class="yl" d="M30 338H1283M30 540H1283"/>
<path class="pl" d="M30 358H1283M30 500H1283M30 514H1283"/>
<path class="yd" style="stroke-dasharray:3 2" d="M30 388H1283M30 490H1283"/>
<path class="wl" d="M30 439H1283"/>
<path class="bb" d="M53 426V438M74 423V438M95 429V438M385 429V438M405 405V438M426 408V438M550 426V438M571 399V438M592 378V438M612 381V438M633 402V438M654 408V438M675 408V438M695 435V438M778 429V438M799 432V438M820 405V438M840 399V438M861 405V438M882 399V438M903 432V438M923 426V438M944 408V438M965 411V438"/>
<path class="rb" d="M33 441V459M115 441V453M136 441V450M157 441V477M177 441V465M198 441V447M219 441V447M240 441V447M260 441V471M281 441V483M302 441V447M322 441V450M343 441V443M364 441V459M447 441V447M467 441V468M488 441V486M509 441V480M529 441V462M716 441V459M737 441V480M758 441V453"/>
<path class="hb" d="M46.5 567H88M377.7 567H440M564.3 567H626M812 567H895M937 567H978"/><path class="hr" d="M253.5 567H295M357 567H378M460.5 567H523M709 567H750"/>
<path class="wl" d="M30 721H1365"/>
<path class="bb" d="M426 702V720M447 690V720M467 690V720M571 714V720M592 690V720M612 660V720M633 636V720M654 618V720M675 606V720M695 606V720M840 687V720M861 681V720M882 669V720M903 669V720M944 669V720M965 669V720"/>
<path class="rw" d="M488 702V720M509 717V720M716 621V720M737 645V720M758 665V720M778 684V720M799 695V720M820 696V720M923 672V720"/>
<path class="rb" d="M33 722V780M157 722V752M177 722V759M198 722V759M260 722V755M281 722V765M302 722V768M529 722V728M550 722V732"/>
<path class="bw" d="M53 722V782M74 722V770M95 722V758M115 722V750M136 722V747M219 722V750M240 722V750M322 722V762M343 722V755M364 722V750M385 722V745M405 722V724"/>
<path class="wl" d="M30 10H1365V220H30ZM30 227H1365V263H30ZM30 268H1365V328H30ZM30 334H1365V544H30ZM30 550H1365V586H30ZM30 592H1365V802H30ZM281 802v12M530 802v12M779 802v12"/>
</g>
<g class="B"><path class="wl" d="M30 652H1365V688H30ZM30 693H1365V903H30Z"/></g>
<polygon points="11.4,861 11.4,867 17.7,867" fill="#fff"/>
<text x="16.2" y="619" textLength="208" lengthAdjust="spacingAndGlyphs" style="font-size:11.5px">D1 TEN_to_CHI_no_OSCILLATOR_DX</text>
<rect x="18.5" y="636.5" width="49.5" height="30.5" fill="#ee7b00" stroke="#fba42f"/><rect x="74" y="636.5" width="49.5" height="30.5" fill="#808080" stroke="#9a9a9a"/>
<text class="bt" x="43" y="658">TF1</text><text class="bt" x="99" y="657">TF2</text>
<text x="16.2" y="727.5" textLength="111" lengthAdjust="spacingAndGlyphs">D1 ABUADX  10.808</text>
<text x="20" y="813" textLength="91" lengthAdjust="spacingAndGlyphs">ABUDMI  0.4815</text>
<g class="ax"><text x="530.4" y="617">1.742</text><text x="530" y="667">0.00</text><text x="535" y="670">-0.334</text><text x="530" y="686">0.00</text><text x="535" y="703">30</text><text x="530.4" y="706">0</text><text x="530" y="750.5">0.00</text><text x="530.4" y="793">0</text><text x="530.4" y="811">1.1755</text><text x="530.4" y="864">-0.7499</text></g>
<rect x="527.4" y="706" width="49" height="8" fill="#ff0"/>
<rect x="527.4" y="726" width="49" height="10.7" fill="#ff0"/><text class="k" x="533" y="735">20.000</text>
<rect x="527.4" y="713.3" width="49" height="13" fill="#80c"/><text class="k" x="533" y="725">32.272</text>
<rect x="527.4" y="757" width="53.6" height="6" fill="#ff0"/>
<rect x="527.4" y="776.7" width="53.6" height="11" fill="#ff0"/><text class="k" x="533" y="787">-40.000</text>
<rect x="527.4" y="761.7" width="49" height="17.6" fill="#80c"/><text class="k" x="533" y="773.5">-23.952</text>
<rect x="527.4" y="834" width="9" height="12.7" fill="#fff"/><text class="k" x="530" y="845">0</text><text x="537" y="845">.00</text>
<text x="11.5" y="883" textLength="64" lengthAdjust="spacingAndGlyphs">1 Sep 2025</text><text x="107" y="883" textLength="71" lengthAdjust="spacingAndGlyphs">17 Sep 2025</text><text x="203.5" y="883" textLength="63" lengthAdjust="spacingAndGlyphs">3 Oct 2025</text><text x="300" y="883">21</text>
<rect x="317" y="871.3" width="110" height="14" fill="#ff0"/><text class="k" x="322" y="883" textLength="99" lengthAdjust="spacingAndGlyphs">2025.10.31 00:00</text>
<g class="C"><ellipse class="el" cx="962" cy="566" rx="78" ry="91"/></g>
<use href="#om" x="268" y="161"/><use href="#om" x="307.9" y="155"/><use href="#om" x="348" y="121"/>
</g>
</svg>
</body></html>
